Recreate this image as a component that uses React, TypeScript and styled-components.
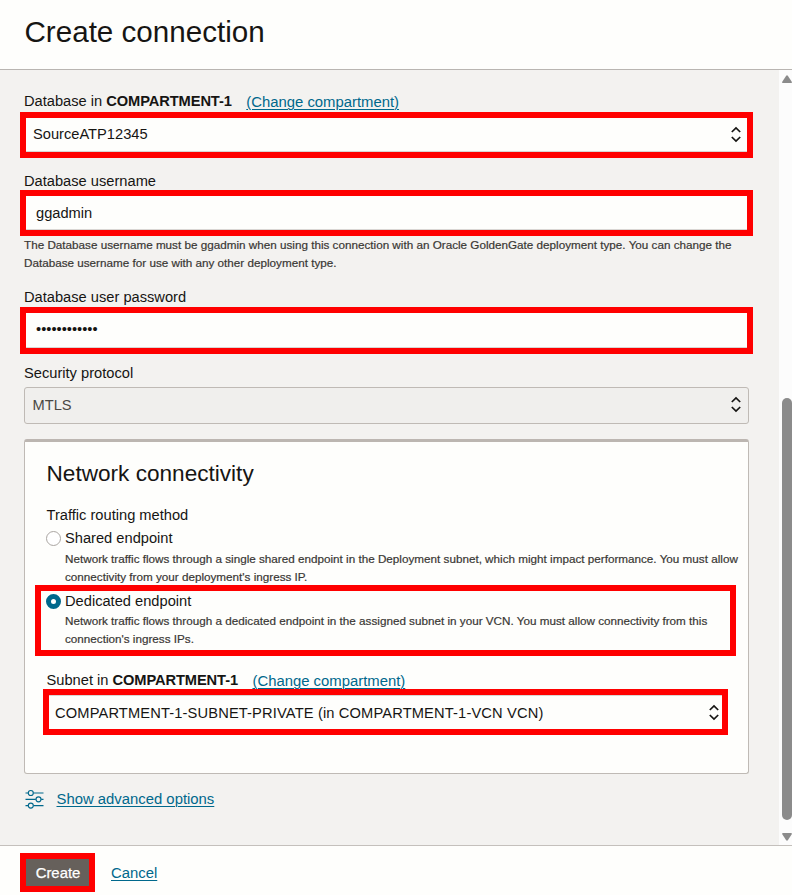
import React from "react";
import styled, { createGlobalStyle } from "styled-components";

const GlobalStyle = createGlobalStyle`
  * { box-sizing: border-box; }
  body {
    margin: 0;
    background: #fefefc;
    color: #161513;
    font-family: "Liberation Sans", Arial, sans-serif;
    font-size: 14.67px;
    line-height: 20px;
  }
`;

const Dialog = styled.div`
  display: flex;
  flex-direction: column;
  width: 792px;
  height: 895px;
  overflow: hidden;
`;

const Header = styled.header`
  height: 70px;
  padding: 14px 24px 0 24.5px;
  background: #fefefc;
  border-bottom: 1px solid #b9b5b1;
`;

const Title = styled.h1`
  margin: 0;
  font-size: 29.6px;
  line-height: 36px;
  font-weight: 400;
`;

const Main = styled.div`
  display: flex;
  height: 775px;
`;

const Form = styled.main`
  width: 779px;
  padding: 21px 26px 0 20px;
  background: #f3f2f0;
`;

const ScrollTrack = styled.div`
  flex: 1;
  display: flex;
  flex-direction: column;
  align-items: flex-end;
  background: #fcfcfc;
  padding-top: 5px;
`;

const Thumb = styled.div`
  width: 10px;
  height: 422px;
  margin: 315px 0 13px;
  border-radius: 5px;
  background: #8b8b8b;
`;

const Label = styled.div<{ $h: number; $indent?: number; $gap?: number }>`
  display: flex;
  height: ${(p) => p.$h}px;
  margin-top: ${(p) => p.$gap ?? 0}px;
  padding-left: ${(p) => p.$indent ?? 4}px;
  white-space: pre;
`;

const Compartment = styled.b`
  letter-spacing: -0.1px;
`;

const Link = styled.a<{ $left?: number; $top?: number }>`
  margin: ${(p) => p.$top ?? 0}px 0 0 ${(p) => p.$left ?? 0}px;
  font-size: 14.87px;
  color: #00688c;
  text-decoration: underline;
  text-decoration-thickness: 1px;
  text-underline-offset: 2px;
  white-space: nowrap;
`;

const Field = styled.div<{ $h?: number; $pad?: number; $top?: number }>`
  display: flex;
  align-items: flex-start;
  justify-content: space-between;
  width: 733px;
  height: ${(p) => p.$h ?? 46}px;
  padding: ${(p) => p.$top ?? 6}px 6px 0 ${(p) => p.$pad ?? 7}px;
  border: 6px solid #ff0000;
  background: #fefefc;
  box-shadow: inset 0 -1px 0 #d9d6d3;
  white-space: nowrap;
`;

const SubnetField = styled(Field)`
  width: 685px;
  margin-left: 18px;
  padding: 8px 3px 0 6px;
  letter-spacing: 0.145px;
  box-shadow: inset 0 1px 0 #d9d6d3;
`;

const DisabledField = styled.div`
  display: flex;
  justify-content: space-between;
  width: 725px;
  height: 37px;
  margin-left: 4px;
  padding: 7px 7px 0 7.5px;
  border: 1px solid #bfbab5;
  border-radius: 3px;
  background: #f0efed;
  color: #4a4845;
`;

const Help = styled.div<{ $indent: number }>`
  height: 36px;
  padding-left: ${(p) => p.$indent}px;
  font-size: 11.7px;
  line-height: 18px;
  color: #393734;
  -webkit-text-stroke: 0.2px #393734;
  white-space: pre;
`;

const Card = styled.section`
  width: 725px;
  height: 335px;
  margin: 15px 0 0 4px;
  border: 1px solid #bfbab5;
  border-top: 3px solid #bcb6b1;
  border-radius: 3px;
  background: #fefefc;
`;

const CardTitle = styled.h2`
  margin: 0;
  padding: 18px 0 0 21.5px;
  height: 63px;
  font-size: 22.6px;
  line-height: 28px;
  font-weight: 400;
`;

const RadioRow = styled.label<{ $indent: number; $h: number }>`
  display: flex;
  height: ${(p) => p.$h}px;
  padding-left: ${(p) => p.$indent}px;
  gap: 4px;
  white-space: nowrap;
`;

const Radio = styled.span<{ $on?: boolean }>`
  width: 15px;
  height: 15px;
  margin-top: 3px;
  border-radius: 50%;
  border: ${(p) => (p.$on ? "5px solid #00688c" : "1px solid #aaa6a2")};
  background: #fff;
`;

const DedicatedOption = styled.div`
  width: 701px;
  height: 71px;
  margin: -1px 0 0 10px;
  border: 6px solid #ff0000;
`;

const Advanced = styled.div`
  display: flex;
  margin-top: 15px;
  padding-left: 5px;
  gap: 12.5px;
`;

const Footer = styled.footer`
  display: flex;
  height: 50px;
  padding: 7px 20px 0;
  gap: 16px;
  border-top: 1px solid #c4c0bc;
  background: #fefefc;
`;

const CreateButton = styled.button`
  width: 75px;
  height: 39px;
  padding: 0 0 0 1px;
  border: 6px solid #ff0000;
  background: #66605b;
  color: #fff;
  font: 14.9px/20px "Liberation Sans", Arial, sans-serif;
  -webkit-text-stroke: 0.25px #fff;
`;

const ChevronBox = styled.span<{ $top?: number }>`
  display: flex;
  padding-top: ${(p) => p.$top ?? 2}px;
`;

const Chevrons = () => (
  <svg width="10" height="17" viewBox="0 0 10 17" fill="none" stroke="#161513" strokeWidth="1.7">
    <path d="M0.8 6L5 1.9L9.2 6M0.8 11L5 15.1L9.2 11" />
  </svg>
);

const SlidersIcon = () => (
  <svg width="19" height="20" viewBox="0 0 19 20" fill="none" stroke="#00688c" strokeWidth="1.15">
    <path d="M0.5 4H3.2M8.5 4H18.5M0.5 10.3H10.8M16.2 10.3H18.5M0.5 16.6H3.2M8.5 16.6H18.5" />
    <circle cx="5.8" cy="4" r="2.5" />
    <circle cx="13.5" cy="10.3" r="2.5" />
    <circle cx="5.8" cy="16.6" r="2.5" />
  </svg>
);

const ScrollArrow = ({ down }: { down?: boolean }) => (
  <svg width="10" height="8" viewBox="0 0 10 8" fill="#8b8b8b">
    <path
      d={
        down
          ? "M1 0H9Q10.4 0 9.6 1.4L6 7Q5 8.4 4 7L0.4 1.4Q-0.4 0 1 0Z"
          : "M1 8H9Q10.4 8 9.6 6.6L6 1Q5 -0.4 4 1L0.4 6.6Q-0.4 8 1 8Z"
      }
    />
  </svg>
);

export default function App() {
  return (
    <>
      <GlobalStyle />
      <Dialog>
        <Header>
          <Title>Create connection</Title>
        </Header>
        <Main>
          <Form>
            <Label $h={21}>
              <span>Database in <Compartment>COMPARTMENT-1</Compartment></span>
              <Link $left={14.5} $top={1}>(Change compartment)</Link>
            </Label>
            <Field>
              SourceATP12345
              <ChevronBox><Chevrons /></ChevronBox>
            </Field>
            <Label $h={19} $gap={13}>Database username</Label>
            <Field $pad={10} $top={7}>ggadmin</Field>
            <Help $indent={4}>
              {"The Database username must be ggadmin when using this connection with an Oracle GoldenGate deployment type. You can change the\nDatabase username for use with any other deployment type."}
            </Help>
            <Label $h={20} $gap={15}>Database user password</Label>
            <Field $h={47} $pad={10}>••••••••••••</Field>
            <Label $h={24} $gap={9}>Security protocol</Label>
            <DisabledField>
              MTLS
              <ChevronBox $top={1}><Chevrons /></ChevronBox>
            </DisabledField>
            <Card>
              <CardTitle>Network connectivity</CardTitle>
              <Label $h={23} $indent={21.5}>Traffic routing method</Label>
              <RadioRow $indent={21} $h={22}>
                <Radio />
                Shared endpoint
              </RadioRow>
              <Help $indent={40}>
                {"Network traffic flows through a single shared endpoint in the Deployment subnet, which might impact performance. You must allow\nconnectivity from your deployment's ingress IP."}
              </Help>
              <DedicatedOption>
                <RadioRow $indent={5} $h={21}>
                  <Radio $on />
                  Dedicated endpoint
                </RadioRow>
                <Help $indent={24}>
                  {"Network traffic flows through a dedicated endpoint in the assigned subnet in your VCN. You must allow connectivity from this\nconnection's ingress IPs."}
                </Help>
              </DedicatedOption>
              <Label $h={19} $gap={14} $indent={21.5}>
                <span>Subnet in <Compartment>COMPARTMENT-1</Compartment></span>
                <Link $left={14.5} $top={1}>(Change compartment)</Link>
              </Label>
              <SubnetField>
                COMPARTMENT-1-SUBNET-PRIVATE (in COMPARTMENT-1-VCN VCN)
                <ChevronBox $top={1}><Chevrons /></ChevronBox>
              </SubnetField>
            </Card>
            <Advanced>
              <SlidersIcon />
              <Link>Show advanced options</Link>
            </Advanced>
          </Form>
          <ScrollTrack>
            <ScrollArrow />
            <Thumb />
            <ScrollArrow down />
          </ScrollTrack>
        </Main>
        <Footer>
          <CreateButton>Create</CreateButton>
          <Link $top={10}>Cancel</Link>
        </Footer>
      </Dialog>
    </>
  );
}
